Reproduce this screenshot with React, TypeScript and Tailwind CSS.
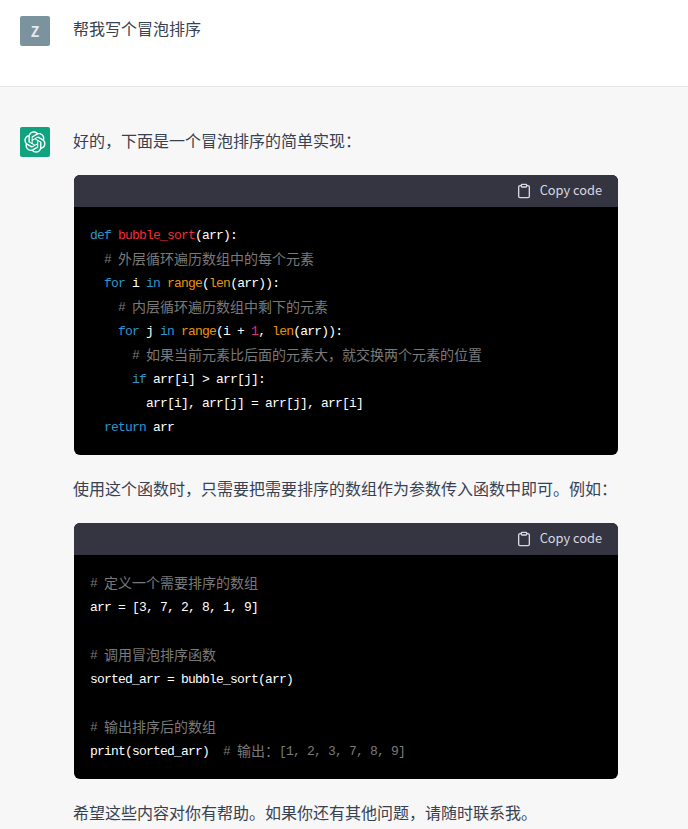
import { Clipboard } from "lucide-react";

const sans = "font-['Noto_Sans_CJK_SC','Noto_Sans',sans-serif]";

type Tok = [string, string?];

const kw = "text-[#2e95d3]";
const fn = "text-[#f22c3d]";
const cm = "text-[#7a7a7a]";
const bi = "text-[#e9950c]";
const num = "text-[#df3079]";

const bubble: Tok[][] = [
  [["def", kw], [" "], ["bubble_sort", fn], ["(arr):"]],
  [["  "], ["# 外层循环遍历数组中的每个元素", cm]],
  [["  "], ["for", kw], [" i "], ["in", kw], [" "], ["range", bi], ["("], ["len", bi], ["(arr)):"]],
  [["    "], ["# 内层循环遍历数组中剩下的元素", cm]],
  [["    "], ["for", kw], [" j "], ["in", kw], [" "], ["range", bi], ["(i + "], ["1", num], [", "], ["len", bi], ["(arr)):"]],
  [["      "], ["# 如果当前元素比后面的元素大，就交换两个元素的位置", cm]],
  [["      "], ["if", kw], [" arr[i] > arr[j]:"]],
  [["        arr[i], arr[j] = arr[j], arr[i]"]],
  [["  "], ["return", kw], [" arr"]],
];

const usage: Tok[][] = [
  [["# 定义一个需要排序的数组", cm]],
  [["arr = [3, 7, 2, 8, 1, 9]"]],
  [[""]],
  [["# 调用冒泡排序函数", cm]],
  [["sorted_arr = bubble_sort(arr)"]],
  [[""]],
  [["# 输出排序后的数组", cm]],
  [["print(sorted_arr)  "], ["# 输出：[1, 2, 3, 7, 8, 9]", cm]],
];

// latin glyphs are squeezed to 7px so they sit at half a CJK cell, like a SimSun code font
function Run({ text, color }: { text: string; color?: string }) {
  const parts = text.split(/([\u3000-\u9fff\uff00-\uffef]+)/);
  return (
    <span className={color}>
      {parts.map((p, i) =>
        i % 2 ? (
          <span key={i} className="align-[-1px] font-['Noto_Sans_CJK_SC',monospace] text-[14px] leading-none tracking-normal">{p}</span>
        ) : (
          <span key={i}>{p}</span>
        )
      )}
    </span>
  );
}

function CodeBlock({ lines }: { lines: Tok[][] }) {
  return (
    <div className="mt-5 ml-px overflow-hidden rounded-md bg-black">
      <div className="flex h-8 items-center justify-end gap-2 bg-[#343541] pr-4 text-[12.8px] text-[#d9d9e3]">
        <Clipboard size={16} strokeWidth={2} />
        <span className={`mb-0.5 ${sans}`}>Copy code</span>
      </div>
      <div className="px-4 pt-[17px] pb-[15px] font-['Liberation_Mono',monospace] text-[13px] leading-6 tracking-[-0.8px] whitespace-pre text-white">
        {lines.map((line, i) => (
          <div key={i} className="h-6">
            {line.map(([t, c], j) => <Run key={j} text={t} color={c} />)}
          </div>
        ))}
      </div>
    </div>
  );
}

function GptLogo() {
  return (
    <div className="flex h-[30px] w-[30px] shrink-0 items-center justify-center rounded-[2px] bg-[#10a37f]">
      <svg width="22" height="22" viewBox="0 0 41 41" fill="white">
        <path d="M37.5324 16.8707C37.9808 15.5241 38.1363 14.0974 37.9886 12.6859C37.8409 11.2744 37.3934 9.91076 36.676 8.68622C35.6126 6.83404 33.9882 5.3676 32.0373 4.4985C30.0864 3.62941 27.9098 3.40259 25.8215 3.85078C24.8796 2.7893 23.7219 1.94125 22.4257 1.36341C21.1295 0.785575 19.7249 0.491269 18.3058 0.500197C16.1708 0.495044 14.0893 1.16803 12.3614 2.42214C10.6335 3.67624 9.34853 5.44666 8.6917 7.47815C7.30085 7.76286 5.98686 8.3414 4.8377 9.17505C3.68854 10.0087 2.73073 11.0782 2.02839 12.312C0.956464 14.1591 0.498905 16.2988 0.721698 18.4228C0.944492 20.5467 1.83612 22.5449 3.268 24.1293C2.81966 25.4759 2.66413 26.9026 2.81182 28.3141C2.95951 29.7256 3.40701 31.0892 4.12437 32.3138C5.18791 34.1659 6.8123 35.6322 8.76321 36.5013C10.7141 37.3704 12.8907 37.5973 14.9789 37.1492C15.9208 38.2107 17.0786 39.0587 18.3747 39.6366C19.6709 40.2144 21.0755 40.5087 22.4946 40.4998C24.6307 40.5054 26.7133 39.8321 28.4418 38.5772C30.1704 37.3223 31.4556 35.5506 32.1119 33.5179C33.5027 33.2332 34.8167 32.6547 35.9659 31.821C37.115 30.9874 38.0728 29.9178 38.7752 28.684C39.8458 26.8371 40.3023 24.6979 40.0789 22.5748C39.8556 20.4517 38.9639 18.4544 37.5324 16.8707ZM22.4978 37.8849C20.7443 37.8874 19.0459 37.2733 17.6994 36.1501C17.7601 36.117 17.8666 36.0586 17.936 36.0161L25.9004 31.4156C26.1003 31.3019 26.2663 31.137 26.3813 30.9378C26.4964 30.7386 26.5563 30.5124 26.5549 30.2825V19.0542L29.9213 20.998C29.9389 21.0068 29.9541 21.0198 29.9656 21.0359C29.977 21.052 29.9842 21.0707 29.9867 21.0902V30.3889C29.9842 32.375 29.1946 34.2791 27.7909 35.6841C26.3872 37.0892 24.4838 37.8806 22.4978 37.8849ZM6.39227 31.0064C5.51397 29.4888 5.19742 27.7107 5.49804 25.9832C5.55718 26.0187 5.66048 26.0818 5.73461 26.1244L13.699 30.7248C13.8975 30.8408 14.1233 30.902 14.3532 30.902C14.583 30.902 14.8088 30.8408 15.0073 30.7248L24.731 25.1103V28.9979C24.7321 29.0177 24.7283 29.0376 24.7199 29.0556C24.7115 29.0736 24.6988 29.0893 24.6829 29.1012L16.6317 33.7497C14.9096 34.7416 12.8643 35.0097 10.9447 34.4954C9.02506 33.9811 7.38785 32.7263 6.39227 31.0064ZM4.29707 13.6194C5.17156 12.0998 6.55279 10.9364 8.19885 10.3327C8.19885 10.4013 8.19491 10.5228 8.19491 10.6071V19.808C8.19351 20.0378 8.25334 20.2638 8.36823 20.4629C8.48312 20.6619 8.64893 20.8267 8.84863 20.9404L18.5723 26.5542L15.206 28.4979C15.1894 28.5089 15.1703 28.5155 15.1505 28.5173C15.1307 28.5191 15.1107 28.516 15.0924 28.5082L7.04046 23.8557C5.32135 22.8601 4.06716 21.2235 3.55289 19.3046C3.03862 17.3858 3.30624 15.3413 4.29707 13.6194ZM31.955 20.0556L22.2312 14.4411L25.5976 12.4981C25.6142 12.4872 25.6333 12.4805 25.6531 12.4787C25.6729 12.4769 25.6928 12.4801 25.7111 12.4879L33.7631 17.1364C34.9967 17.849 36.0017 18.8982 36.6606 20.1613C37.3194 21.4244 37.6047 22.849 37.4832 24.2684C37.3617 25.6878 36.8382 27.0432 35.9743 28.1759C35.1103 29.3086 33.9415 30.1717 32.6047 30.6641C32.6047 30.5947 32.6047 30.4733 32.6047 30.3889V21.188C32.6066 20.9586 32.5474 20.7328 32.4332 20.5338C32.319 20.3348 32.154 20.1698 31.955 20.0556ZM35.3055 15.0128C35.2464 14.9765 35.1431 14.9142 35.069 14.8717L27.1045 10.2712C26.906 10.1554 26.6803 10.0943 26.4504 10.0943C26.2206 10.0943 25.9948 10.1554 25.7963 10.2712L16.0726 15.8858V11.9982C16.0715 11.9783 16.0753 11.9585 16.0837 11.9405C16.0921 11.9225 16.1048 11.9068 16.1207 11.8949L24.1719 7.25025C25.4053 6.53903 26.8121 6.19376 28.2311 6.25482C29.6502 6.31589 31.0234 6.78077 32.1923 7.59508C33.3612 8.40939 34.2778 9.53945 34.8367 10.8537C35.3956 12.168 35.5739 13.6125 35.3506 15.0151L35.3055 15.0128ZM14.2424 21.9419L10.8752 19.9981C10.8576 19.9893 10.8423 19.9763 10.8309 19.9602C10.8195 19.9441 10.8122 19.9254 10.8098 19.9058V10.6071C10.8107 9.18295 11.2173 7.78848 11.9819 6.58696C12.7466 5.38544 13.8377 4.42659 15.1275 3.82264C16.4173 3.21869 17.8524 2.99464 19.2649 3.1767C20.6775 3.35876 22.0089 3.93941 23.1034 4.85067C23.0427 4.88379 22.937 4.94215 22.8668 4.98473L14.9024 9.58517C14.7025 9.69878 14.5366 9.86356 14.4215 10.0626C14.3065 10.2616 14.2466 10.4877 14.2479 10.7175L14.2424 21.9419ZM16.071 17.9991L20.4018 15.4978L24.7325 17.9975V22.9985L20.4018 25.4983L16.071 22.9985V17.9991Z" />
      </svg>
    </div>
  );
}

export default function App() {
  return (
    <div className={`h-[829px] w-full overflow-hidden bg-[#f7f7f8] text-[16px] text-[#374151] ${sans}`}>
      <div className="flex h-[87px] gap-[23px] border-b border-[#e5e5e5] bg-white pt-4 pl-5">
        <div className="flex h-[30px] w-[30px] shrink-0 items-center justify-center rounded-[2px] bg-[#7b939e] text-[14px] font-bold text-white/80">
          Z
        </div>
        <p className="-mt-px h-7 leading-[26px]">帮我写个冒泡排序</p>
      </div>
      <div className="flex gap-[23px] pt-10 pr-[70px] pl-5">
        <GptLogo />
        <div className="min-w-0 flex-1">
          <p className="h-7 leading-[26px]">好的，下面是一个冒泡排序的简单实现：</p>
          <CodeBlock lines={bubble} />
          <p className="mt-5 h-7 leading-[26px]">使用这个函数时，只需要把需要排序的数组作为参数传入函数中即可。例如：</p>
          <CodeBlock lines={usage} />
          <p className="mt-5 h-7 leading-[26px]">希望这些内容对你有帮助。如果你还有其他问题，请随时联系我。</p>
        </div>
      </div>
    </div>
  );
}
